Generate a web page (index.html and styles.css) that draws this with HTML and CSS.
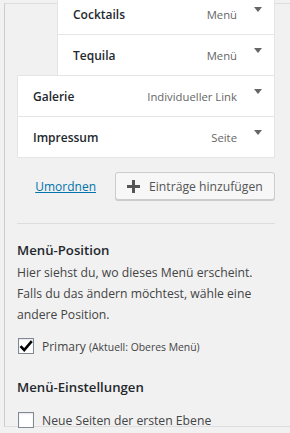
FILE: index.html
```html
<!DOCTYPE html>
<html lang="de">
<head>
<meta charset="utf-8">
<link rel="stylesheet" href="styles.css">
</head>
<body>
<div class="panel">
  <ul class="menu-list">
    <li class="item depth-1"><span class="title">Cocktails</span><span class="type">Menü</span><span class="arrow"></span></li>
    <li class="item depth-1"><span class="title">Tequila</span><span class="type">Menü</span><span class="arrow"></span></li>
    <li class="item"><span class="title">Galerie</span><span class="type">Individueller Link</span><span class="arrow"></span></li>
    <li class="item"><span class="title">Impressum</span><span class="type">Seite</span><span class="arrow"></span></li>
  </ul>
  <div class="actions">
    <a class="reorder" href="#">Umordnen</a>
    <button class="add-btn" type="button">
      <svg class="plus" width="13" height="13" viewBox="0 0 13 13"><rect x="5" y="0" width="3" height="13" fill="#555"/><rect x="0" y="5" width="13" height="3" fill="#555"/></svg>
      <span>Einträge hinzufügen</span>
    </button>
  </div>
  <div class="settings">
    <h3 class="heading">Menü-Position</h3>
    <p class="desc">Hier siehst du, wo dieses Menü erscheint. Falls du das ändern möchtest, wähle eine andere Position.</p>
    <label class="check-row">
      <span class="box"><svg width="14" height="14" viewBox="0 0 14 14"><path d="M1.5 7.2 L5.2 11 L12.8 2.2" fill="none" stroke="#000" stroke-width="2.6"/></svg></span>
      <span class="label">Primary <small>(Aktuell: Oberes Menü)</small></span>
    </label>
    <h3 class="heading heading-2">Menü-Einstellungen</h3>
    <label class="check-row check-row-2">
      <span class="box"></span>
      <span class="label">Neue Seiten der ersten Ebene</span>
    </label>
  </div>
</div>
</body>
</html>
```
FILE: styles.css
```css
html, body {
  margin: 0;
  padding: 0;
  background: #f1f1f1;
  font-family: "Open Sans", "Noto Sans", sans-serif;
  font-size: 12.2px;
  color: #444;
  overflow: hidden;
  height: 433px;
}
.panel {
  margin: 3px 0 0 4px;
  border-left: 1px solid #ccc;
  border-top: 1px solid #ddd;
  border-bottom: 1px solid #ddd;
  padding: 0 15px 0 12px;
  height: 424px;
  box-sizing: border-box;
}
.menu-list {
  list-style: none;
  margin: -11px 0 0 0;
  padding: 0;
}
.item {
  display: flex;
  align-items: center;
  height: 42px;
  box-sizing: border-box;
  border: 1px solid #e5e5e5;
  background: #fff;
  padding: 0 12px 0 15px;
  margin-top: -1px;
}
.item:first-child { margin-top: 0; }
.depth-1 { margin-left: 40px; }
.title {
  flex: 1;
  font-size: 12px;
  font-weight: 600;
  color: #23282d;
}
.type {
  font-size: 11.3px;
  color: #666;
}
.arrow {
  align-self: flex-start;
  margin: 13px 0 0 17px;
  width: 0;
  height: 0;
  border-left: 4px solid transparent;
  border-right: 4px solid transparent;
  border-top: 5px solid #666;
}
.actions {
  display: flex;
  align-items: center;
  justify-content: flex-end;
  gap: 19px;
  margin-top: 14px;
  padding-bottom: 23px;
  border-bottom: 1px solid #ddd;
}
.reorder {
  font-size: 12px;
  color: #0073aa;
  text-decoration: underline;
}
.add-btn {
  display: flex;
  align-items: center;
  gap: 9px;
  width: 160px;
  height: 28px;
  box-sizing: border-box;
  padding: 0 10px 0 11px;
  background: #f7f7f7;
  border: 1px solid #ccc;
  border-radius: 3px;
  box-shadow: 0 1px 0 #ccc;
  font-family: inherit;
  font-size: 12.2px;
  color: #555;
  white-space: nowrap;
}
.settings {
  padding-top: 16px;
}
.heading {
  margin: 0;
  font-size: 13.2px;
  line-height: 20px;
  font-weight: 600;
  color: #23282d;
}
.desc {
  margin: 2px 0 0 0;
  line-height: 21px;
}
.check-row {
  display: flex;
  align-items: center;
  gap: 8px;
  margin-top: 13px;
  height: 16px;
  padding-left: 1px;
}
.box {
  width: 16px;
  height: 16px;
  box-sizing: border-box;
  border: 1px solid #7e8993;
  background: #fff;
  display: flex;
  align-items: center;
  justify-content: center;
  box-shadow: inset 0 1px 2px rgba(0,0,0,0.1);
}
.label {
  font-size: 12px;
}
.label small {
  font-size: 10.4px;
}
.heading-2 {
  margin-top: 23px;
}
.check-row-2 {
  margin-top: 15px;
}
.check-row-2 .label {
  font-size: 12.2px;
}
```
